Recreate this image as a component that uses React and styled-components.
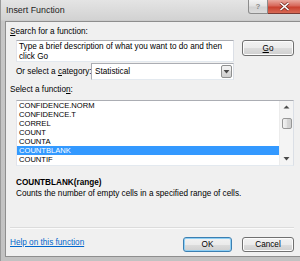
import React from "react";
import styled, { createGlobalStyle } from "styled-components";

const GlobalStyle = createGlobalStyle`
    html, body {
        margin: 0;
        padding: 0;
        overflow: hidden;
        background: #ffffff;
    }
    body {
        font-family: "Liberation Sans", Arial, sans-serif;
        font-size: 8.2px;
        color: #000;
    }
`;

const Window = styled.div`
    width: 306px;
    height: 261px;
    box-sizing: border-box;
    padding: 0 5px 4px 5px;
    display: flex;
    flex-direction: column;
    background: linear-gradient(#e4e4e4 0px, #d2d2d2 20px, #c6c6c6 21px, #c2c2c2 100%);
    box-shadow: inset 1px 0 0 #9a9a9a;
`;

const TitleBar = styled.div`
    height: 21px;
    display: flex;
    align-items: flex-start;
    flex-shrink: 0;
`;

const Title = styled.div`
    font-size: 8.9px;
    line-height: 20px;
    margin-left: 1px;
    color: #1e1e1e;
`;

const Captions = styled.div`
    margin-left: auto;
    margin-right: -1px;
    display: flex;
`;

const CaptionButton = styled.div`
    height: 14px;
    width: ${(p) => p.$w}px;
    box-sizing: border-box;
    display: flex;
    align-items: center;
    justify-content: center;
    border: 1px solid ${(p) => (p.$close ? "#7a3a34" : "#8c8c8c")};
    border-top: none;
    border-left: ${(p) => (p.$close ? "none" : undefined)};
    border-radius: ${(p) => (p.$close ? "0 0 3px 0" : "0 0 0 3px")};
    background: ${(p) =>
        p.$close
            ? "linear-gradient(#e9a89e 0%, #d7675a 45%, #c9402f 55%, #d86a55 100%)"
            : "linear-gradient(#f3f3f3 0%, #e2e2e2 45%, #d2d2d2 55%, #dcdcdc 100%)"};
    color: #8a8a8a;
    font-size: 8px;
    font-weight: bold;
`;

const Client = styled.div`
    flex: 1;
    display: flex;
    flex-direction: column;
    background: #f0f0f0;
    border: 1px solid #8e8e8e;
`;

const Label = styled.div`
    line-height: 11px;
    margin: ${(p) => p.$m || "0"};
    white-space: nowrap;
`;

const Key = styled.span`
    text-decoration: underline;
`;

const SearchRow = styled.div`
    display: flex;
    align-items: flex-start;
    gap: 8px;
    margin-top: 3px;
    padding: 0 6px 0 10px;
`;

const TextArea = styled.div`
    width: 218px;
    height: 22px;
    box-sizing: border-box;
    background: #fff;
    border: 1px solid #abadb3;
    border-left-color: #e2e3ea;
    border-right-color: #dbdfe6;
    border-bottom-color: #e3e9ef;
    padding: 1px 3px 0 2px;
    line-height: 10px;
`;

const Button = styled.div`
    width: ${(p) => p.$w}px;
    height: ${(p) => p.$h || 15}px;
    box-sizing: border-box;
    display: flex;
    align-items: center;
    justify-content: center;
    border: 1px solid ${(p) => (p.$default ? "#3c7fb1" : "#707070")};
    border-radius: 3px;
    background: linear-gradient(#f2f2f2 0%, #ebebeb 50%, #dddddd 50%, #cfcfcf 100%);
    box-shadow: ${(p) => (p.$default ? "inset 0 0 0 1px #8fd0f5" : "inset 0 0 0 1px #fcfcfc")};
    flex-shrink: 0;
`;

const CategoryRow = styled.div`
    display: flex;
    align-items: center;
    height: 17px;
    margin-top: 1px;
    padding-left: 10px;
`;

const CategoryLabel = styled(Label)`
    width: 75px;
`;

const Combo = styled.div`
    width: 143px;
    height: 17px;
    box-sizing: border-box;
    display: flex;
    align-items: center;
    background: #fff;
    border: 1px solid #abadb3;
    border-right-color: #dbdfe6;
    border-bottom-color: #e3e9ef;
    padding: 0 1px 0 3px;
`;

const ComboText = styled.div`
    flex: 1;
    line-height: 11px;
`;

const DropButton = styled.div`
    width: 11px;
    height: 13px;
    box-sizing: border-box;
    display: flex;
    align-items: center;
    justify-content: center;
    border: 1px solid #8e8f8f;
    border-radius: 2px;
    background: linear-gradient(#f2f2f2 0%, #ebebeb 50%, #dddddd 50%, #cfcfcf 100%);
`;

const ListBox = styled.div`
    margin: 5px 6px 0 10px;
    height: 66px;
    box-sizing: border-box;
    display: flex;
    background: #fff;
    border: 1px solid #828790;
    border-color: #abadb3 #dbdfe6 #e3e9ef #e2e3ea;
`;

const Rows = styled.div`
    flex: 1;
    overflow: hidden;
`;

const Row = styled.div`
    height: 9px;
    line-height: 9px;
    font-size: 7.6px;
    padding-left: 2px;
    background: ${(p) => (p.$selected ? "#3399ff" : "transparent")};
    color: ${(p) => (p.$selected ? "#fff" : "#000")};
`;

const ScrollBar = styled.div`
    width: 13px;
    display: flex;
    flex-direction: column;
    align-items: center;
    background: #f4f4f4;
    border-left: 1px solid #ececec;
`;

const ScrollArrow = styled.div`
    height: 13px;
    width: 100%;
    display: flex;
    align-items: center;
    justify-content: center;
`;

const Thumb = styled.div`
    width: 10px;
    height: 11px;
    box-sizing: border-box;
    margin-top: 4px;
    border: 1px solid #979797;
    border-radius: 2px;
    background: linear-gradient(90deg, #f3f3f3, #e4e4e4 50%, #d7d7d7 50%, #cfcfcf);
`;

const Spacer = styled.div`
    flex: 1;
`;

const Syntax = styled.div`
    margin: 11px 6px 0 10px;
    line-height: 11px;
    font-weight: bold;
`;

const Description = styled.div`
    margin: 0 6px 0 10px;
    line-height: 11px;
`;

const Separator = styled.div`
    margin: 28px 6px 0 4px;
    height: 1px;
    background: #dcdcdc;
    border-bottom: 1px solid #fbfbfb;
`;

const Footer = styled.div`
    display: flex;
    align-items: flex-start;
    padding: 8px 6px 0 4px;
    gap: 10px;
`;

const HelpLink = styled.div`
    line-height: 11px;
    color: #0066cc;
    text-decoration: underline;
    margin-right: auto;
`;

const functions = [
    "CONFIDENCE.NORM",
    "CONFIDENCE.T",
    "CORREL",
    "COUNT",
    "COUNTA",
    "COUNTBLANK",
    "COUNTIF",
];

const Triangle = ({ up }) => (
    <svg width="7" height="5" viewBox="0 0 7 5">
        {up ? (
            <polygon points="3.5,0.5 6.5,3.5 0.5,3.5" fill="#4a4a4a" />
        ) : (
            <polygon points="0.5,1 6.5,1 3.5,4.5" fill="#4a4a4a" />
        )}
    </svg>
);

const App = () => {
    return (
        <>
            <GlobalStyle />
            <Window>
                <TitleBar>
                    <Title>Insert Function</Title>
                    <Captions>
                        <CaptionButton $w={20}>?</CaptionButton>
                        <CaptionButton $w={34} $close>
                            <svg width="11" height="9" viewBox="0 0 11 9">
                                <path
                                    d="M1.5 1 L9.5 8 M9.5 1 L1.5 8"
                                    stroke="#7a3028"
                                    strokeWidth="3"
                                />
                                <path
                                    d="M1.5 1 L9.5 8 M9.5 1 L1.5 8"
                                    stroke="#ffffff"
                                    strokeWidth="1.6"
                                />
                            </svg>
                        </CaptionButton>
                    </Captions>
                </TitleBar>
                <Client>
                    <Label $m="4px 0 0 4px">
                        <Key>S</Key>earch for a function:
                    </Label>
                    <SearchRow>
                        <TextArea>
                            Type a brief description of what you want to do and then click Go
                        </TextArea>
                        <Button $w={52} $h={16}>
                            <Key>G</Key>o
                        </Button>
                    </SearchRow>
                    <CategoryRow>
                        <CategoryLabel>
                            Or select a <Key>c</Key>ategory:
                        </CategoryLabel>
                        <Combo>
                            <ComboText>Statistical</ComboText>
                            <DropButton>
                                <Triangle />
                            </DropButton>
                        </Combo>
                    </CategoryRow>
                    <Label $m="4px 0 0 4px">
                        Select a functio<Key>n</Key>:
                    </Label>
                    <ListBox>
                        <Rows>
                            {functions.map((f) => (
                                <Row key={f} $selected={f === "COUNTBLANK"}>
                                    {f}
                                </Row>
                            ))}
                        </Rows>
                        <ScrollBar>
                            <ScrollArrow>
                                <Triangle up />
                            </ScrollArrow>
                            <Thumb />
                            <Spacer />
                            <ScrollArrow>
                                <Triangle />
                            </ScrollArrow>
                        </ScrollBar>
                    </ListBox>
                    <Syntax>COUNTBLANK(range)</Syntax>
                    <Description>
                        Counts the number of empty cells in a specified range of cells.
                    </Description>
                    <Separator />
                    <Footer>
                        <HelpLink>Help on this function</HelpLink>
                        <Button $w={49} $default>
                            OK
                        </Button>
                        <Button $w={52}>Cancel</Button>
                    </Footer>
                </Client>
            </Window>
        </>
    );
};

export default App;
